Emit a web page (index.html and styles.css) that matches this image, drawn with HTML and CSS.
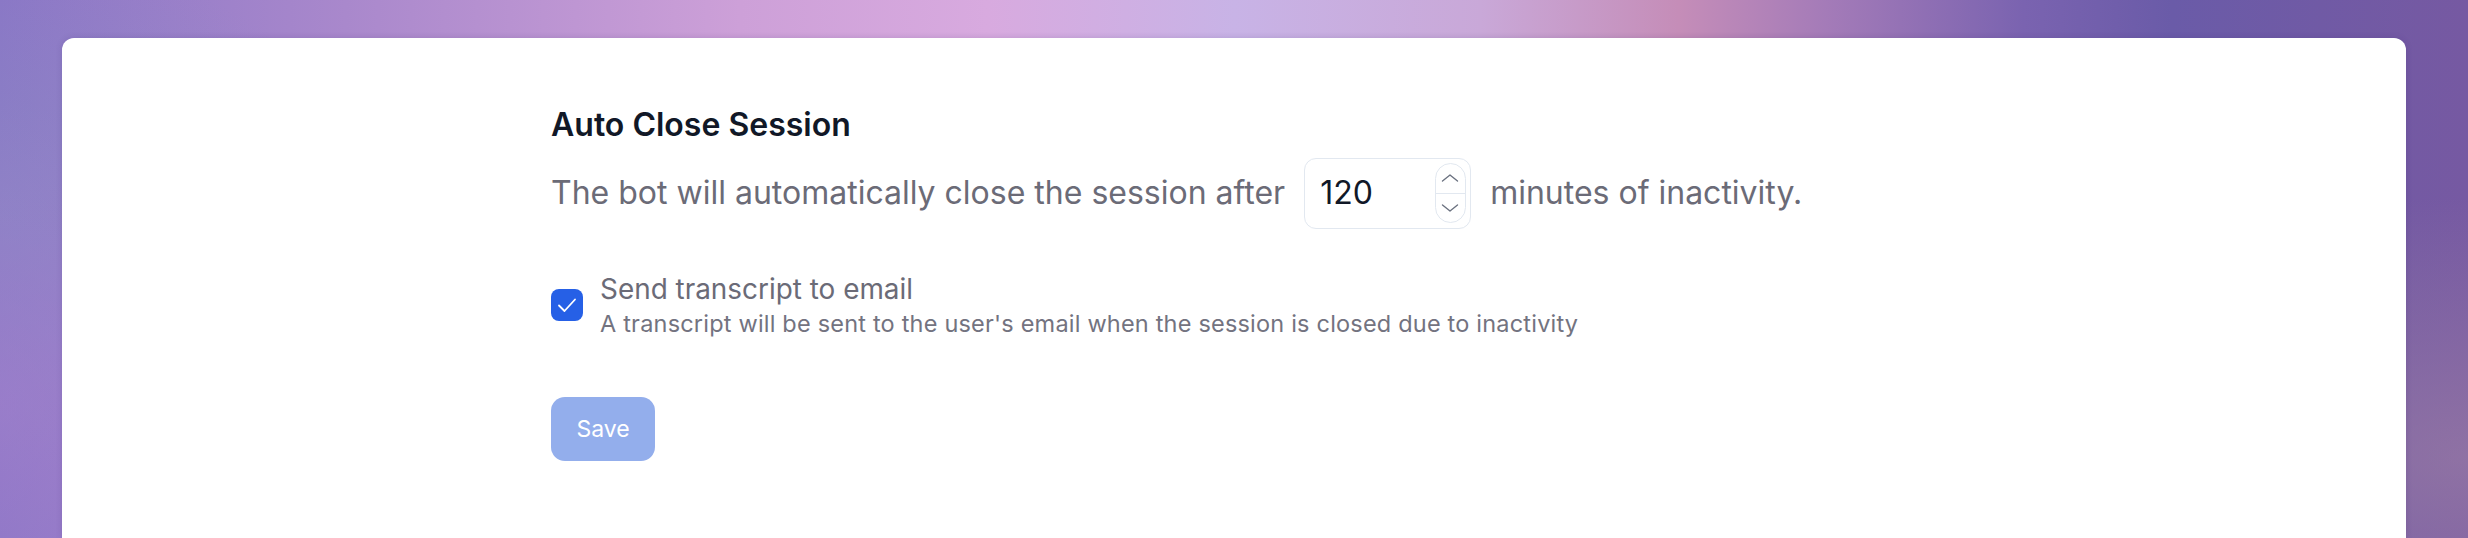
FILE: index.html
```html
<!DOCTYPE html>
<html lang="en">
<head>
<meta charset="utf-8">
<title>Auto Close Session</title>
<link rel="stylesheet" href="styles.css">
</head>
<body>
  <div class="page">
    <main class="card">
      <section class="settings">
        <h2 class="title">Auto Close Session</h2>
        <div class="timeout-row">
          <span class="text">The bot will automatically close the session after</span>
          <div class="number-input">
            <span class="value">120</span>
            <div class="spinner">
              <span class="spin-btn">
                <svg viewBox="0 0 18 8" width="18" height="8"><path d="M1.5 7 L9 1 L16.5 7" fill="none" stroke="#6b7280" stroke-width="1.4" stroke-linecap="round" stroke-linejoin="round"/></svg>
              </span>
              <span class="spin-btn">
                <svg viewBox="0 0 18 8" width="18" height="8"><path d="M1.5 1 L9 7 L16.5 1" fill="none" stroke="#6b7280" stroke-width="1.4" stroke-linecap="round" stroke-linejoin="round"/></svg>
              </span>
            </div>
          </div>
          <span class="text">minutes of inactivity.</span>
        </div>
        <div class="check-row">
          <span class="checkbox">
            <svg viewBox="0 0 32 32" width="32" height="32"><path d="M8 16.5 L13.5 22 L24 10.5" fill="none" stroke="#ffffff" stroke-width="1.8" stroke-linecap="round" stroke-linejoin="round"/></svg>
          </span>
          <div class="check-text">
            <div class="check-label">Send transcript to email</div>
            <div class="check-desc">A transcript will be sent to the user's email when the session is closed due to inactivity</div>
          </div>
        </div>
        <button class="save-btn" type="button">Save</button>
      </section>
    </main>
  </div>
</body>
</html>
```

FILE: styles.css
```css
* { box-sizing: border-box; }

html, body {
  margin: 0;
  padding: 0;
  height: 538px;
  overflow: hidden;
}

body {
  font-family: "Inter", "Noto Sans", sans-serif;
  background:
    radial-gradient(ellipse 420px 300px at 0% 75%, rgba(165, 128, 205, 0.55), rgba(165, 128, 205, 0) 100%),
    radial-gradient(ellipse 380px 260px at 0% 40%, rgba(138, 140, 196, 0.55), rgba(138, 140, 196, 0) 100%),
    radial-gradient(ellipse 500px 260px at 100% 85%, rgba(160, 130, 165, 0.6), rgba(160, 130, 165, 0) 100%),
    linear-gradient(90deg, #8a76c6 0%, #a988cc 14%, #cda0d8 30%, #d8aadf 40%, #c8b3e6 50%, #c9a8d8 60%, #c58db8 68%, #a47bb8 74%, #7a63b0 82%, #6a5ba8 88%, #7659a2 100%);
}

.page {
  padding: 38px 62px 0 62px;
}

.card {
  background: #ffffff;
  border-radius: 12px 12px 0 0;
  height: 500px;
  overflow: hidden;
  box-shadow: 0 0 6px rgba(60, 40, 110, 0.18);
  padding: 65px 0 0 489px;
}

.settings {
  display: flex;
  flex-direction: column;
  align-items: flex-start;
}

.title {
  margin: 0;
  font-size: 32px;
  line-height: 44px;
  font-weight: 600;
  color: #111827;
}

.timeout-row {
  margin-top: 10.6px;
  display: flex;
  align-items: center;
  gap: 19px;
}

.text {
  font-size: 32px;
  line-height: 44px;
  color: #6b6b77;
}

.number-input {
  width: 167px;
  height: 71px;
  border: 1.5px solid #e2e8f0;
  border-radius: 12px;
  display: flex;
  align-items: center;
  justify-content: space-between;
  padding: 0 4.5px 0 15px;
}

.value {
  font-size: 32px;
  line-height: 44px;
  color: #111827;
}

.spinner {
  width: 31px;
  height: 60px;
  border: 1.5px solid #e2e8f0;
  border-radius: 16px;
  display: flex;
  flex-direction: column;
}

.spin-btn {
  flex: 1;
  display: flex;
  align-items: center;
  justify-content: center;
}

.spin-btn + .spin-btn {
  border-top: 1.5px solid #e2e8f0;
}

.check-row {
  margin-top: 41px;
  display: flex;
  align-items: center;
  gap: 17px;
}

.checkbox {
  width: 32px;
  height: 32px;
  border-radius: 8px;
  background: #2660e6;
  display: flex;
}

.check-label {
  font-size: 27.9px;
  line-height: 39.6px;
  color: #6b6b77;
}

.check-desc {
  font-size: 23.5px;
  line-height: 30.8px;
  letter-spacing: 0.2px;
  color: #737380;
}

.save-btn {
  margin-top: 57px;
  width: 104px;
  height: 64px;
  border: none;
  border-radius: 14px;
  background: #93aeec;
  color: #ffffff;
  font-family: "Inter", "Noto Sans", sans-serif;
  font-size: 23px;
  font-weight: 400;
  padding: 0;
}
```
